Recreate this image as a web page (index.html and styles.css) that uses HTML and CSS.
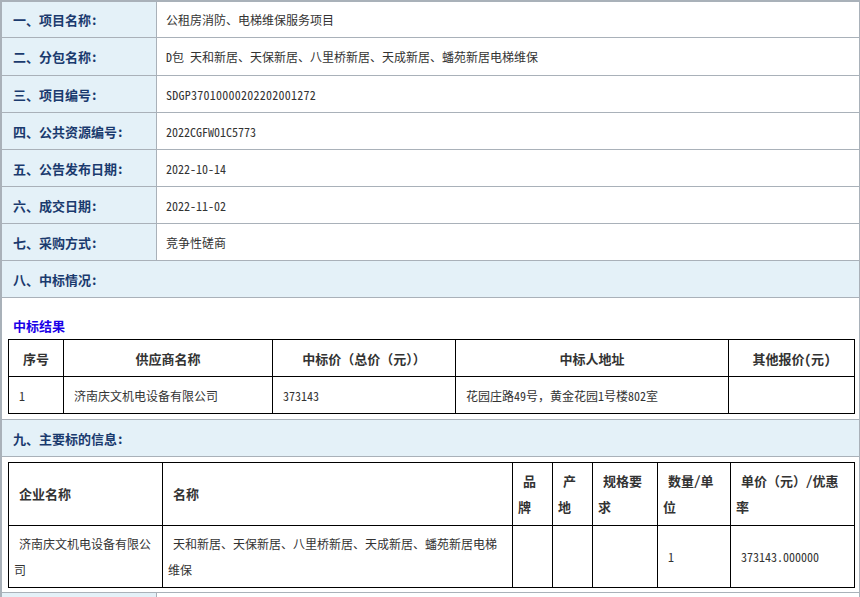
FILE: index.html
```html
<!DOCTYPE html>
<html lang="zh-CN">
<head>
<meta charset="utf-8">
<title>成交公告</title>
<link rel="stylesheet" href="styles.css">
</head>
<body>
<table class="info">
  <colgroup><col class="c-label"><col></colgroup>
  <tr class="r1"><th>一、项目名称:</th><td>公租房消防、电梯维保服务项目</td></tr>
  <tr class="r2"><th>二、分包名称:</th><td>D包 天和新居、天保新居、八里桥新居、天成新居、蟠苑新居电梯维保</td></tr>
  <tr><th>三、项目编号:</th><td class="code">SDGP37010000202202001272</td></tr>
  <tr><th>四、公共资源编号:</th><td>2022CGFW01C5773</td></tr>
  <tr><th>五、公告发布日期:</th><td>2022-10-14</td></tr>
  <tr><th>六、成交日期:</th><td>2022-11-02</td></tr>
  <tr><th>七、采购方式:</th><td>竞争性磋商</td></tr>
  <tr><th colspan="2">八、中标情况:</th></tr>
  <tr class="content">
    <td colspan="2" class="box box1">
      <div class="sub-title">中标结果</div>
      <table class="grid grid1">
        <colgroup><col style="width:55px"><col style="width:209px"><col style="width:183px"><col style="width:273px"><col style="width:126px"></colgroup>
        <tr><th>序号</th><th>供应商名称</th><th>中标价（总价（元））</th><th>中标人地址</th><th>其他报价(元)</th></tr>
        <tr><td>1</td><td>济南庆文机电设备有限公司</td><td>373143</td><td>花园庄路49号，黄金花园1号楼802室</td><td></td></tr>
      </table>
    </td>
  </tr>
  <tr><th colspan="2">九、主要标的信息:</th></tr>
  <tr class="content">
    <td colspan="2" class="box box2">
      <table class="grid grid2">
        <colgroup><col style="width:154px"><col style="width:350px"><col style="width:40px"><col style="width:40px"><col style="width:65px"><col style="width:73px"><col style="width:124px"></colgroup>
        <tr class="h"><th>企业名称</th><th>名称</th><th>品<br>牌</th><th>产<br>地</th><th>规格要<br>求</th><th>数量/单<br>位</th><th>单价（元）/优惠<br>率</th></tr>
        <tr class="d"><td>济南庆文机电设备有限公<br>司</td><td>天和新居、天保新居、八里桥新居、天成新居、蟠苑新居电梯<br>维保</td><td></td><td></td><td></td><td>1</td><td>373143.000000</td></tr>
      </table>
    </td>
  </tr>
  <tr><th></th><td></td></tr>
</table>
</body>
</html>
```
FILE: styles.css
```css
html, body {
  margin: 0;
  padding: 0;
  background: #ffffff;
}
body {
  font-family: "Noto Sans Mono CJK SC", "Noto Sans CJK SC", sans-serif;
  font-size: 12px;
  color: #333333;
  overflow: hidden;
}
.info {
  width: 860px;
  border-collapse: separate;
  border-spacing: 0;
  border-top: 1px solid #a9b1b9;
  border-left: 1px solid #a9b1b9;
  table-layout: fixed;
}
.info .c-label { width: 156px; }
.info > tbody > tr > th,
.info > tbody > tr > td {
  border-right: 1px solid #a9b1b9;
  border-bottom: 1px solid #a9b1b9;
  height: 36px;
  padding: 0;
  vertical-align: middle;
}
.info > tbody > tr:first-child > th,
.info > tbody > tr:first-child > td {
  border-top: 1px solid #a9b1b9;
}
.info > tbody > tr > th:first-child,
.info > tbody > tr > td:first-child {
  border-left: 1px solid #a9b1b9;
}
.info > tbody > tr.r1 > th,
.info > tbody > tr.r1 > td { height: 35px; }
.info > tbody > tr.r2 > th,
.info > tbody > tr.r2 > td { height: 37px; }
.info > tbody > tr > th {
  background: #e4f1f8;
  color: #1a3a6e;
  font-weight: bold;
  font-size: 13px;
  text-align: left;
  padding-left: 11px;
}
.info > tbody > tr > td {
  padding-left: 9px;
  background: #ffffff;
}
.info > tbody > tr > td.code {
  letter-spacing: 0.25px;
}
.info > tbody > tr.content > td.box {
  padding: 0 5px 5px 6px;
  height: auto;
  vertical-align: top;
}
.info > tbody > tr.content > td.box1 { height: 116px; }
.info > tbody > tr.content > td.box2 { padding-top: 5px; padding-bottom: 4px; }
.sub-title {
  margin-top: 15px;
  height: 26px;
  line-height: 26px;
  color: #1a00e8;
  font-weight: bold;
  font-size: 13px;
  padding-left: 5px;
}
.grid {
  width: 100%;
  border-collapse: collapse;
  table-layout: fixed;
}
.grid th,
.grid td {
  border: 1px solid #000000;
  color: #333333;
  padding: 0 10px;
  vertical-align: middle;
  background: #ffffff;
}
.grid th {
  font-weight: bold;
  font-size: 13px;
}
.grid1 th,
.grid1 td { height: 36px; }
.grid1 th { text-align: center; }
.grid1 td { text-align: left; }
.grid2 th,
.grid2 td {
  text-align: left;
  padding: 0 5px;
  text-indent: 5px;
  line-height: 26px;
  white-space: nowrap;
}
.grid2 tr.h th { height: 62px; }
.grid2 tr.d td { height: 61px; }
```
